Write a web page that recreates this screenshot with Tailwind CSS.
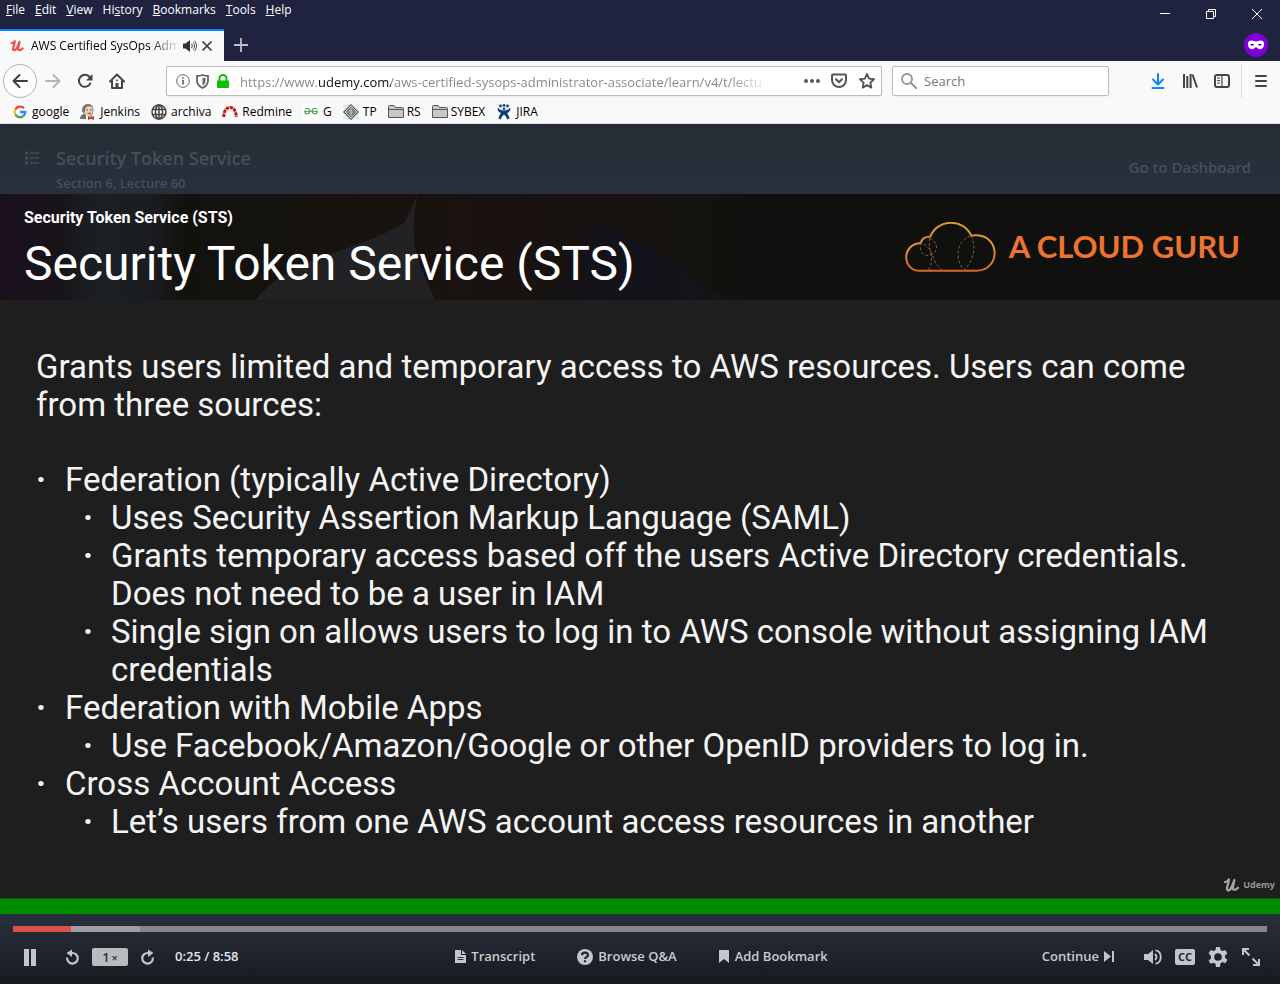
<!DOCTYPE html>
<html lang="en">
<head>
<meta charset="utf-8">
<title>AWS Certified SysOps Administrator</title>
<script src="https://cdn.jsdelivr.net/npm/@tailwindcss/browser@4"></script>
</head>
<body class="flex min-h-screen flex-col bg-[#1e1e1e] font-['Open_Sans','Noto_Sans',sans-serif] text-xs text-black">

<!-- Title bar: menus, tabs, window buttons -->
<header class="flex h-[61px] justify-between bg-[#20233f] text-white">
  <div class="flex flex-col justify-between">
    <nav class="flex h-5 items-center gap-[10px] pl-1.5 leading-5" aria-label="Menu">
      <button><u>F</u>ile</button>
      <button><u>E</u>dit</button>
      <button><u>V</u>iew</button>
      <button>Hi<u>s</u>tory</button>
      <button><u>B</u>ookmarks</button>
      <button><u>T</u>ools</button>
      <button><u>H</u>elp</button>
    </nav>
    <div class="flex h-8 items-center">
      <div class="flex h-8 w-[224px] items-center border-t-2 border-[#0a84ff] bg-[#f9f9fa] pl-[10px] text-black">
        <svg class="h-[12px] w-[14px] shrink-0" viewBox="0 0 17 15" fill="none" stroke="#ea5252" stroke-linecap="round" stroke-linejoin="round"><path stroke-width="2.8" d="M2 4C3.5 4 5 2.6 5.6 1.6C6 3.600 4.100 8 3.700 10.500C3.400 13 5.500 13.500 7.300 11.500C9.500 9 10.600 4.500 11.600 2.200C11 5 10 8.500 10 10.800C10 13.500 13 13.200 15.500 10.500"/></svg>
        <span class="ml-[7px] w-[148px] overflow-hidden whitespace-nowrap bg-linear-to-r from-black from-80% to-transparent bg-clip-text text-transparent">AWS Certified SysOps Admini</span>
        <button class="ml-1" aria-label="Mute tab"><svg class="size-[14px]" viewBox="0 0 14 14" fill="none" stroke="#333" ><path fill="#333" stroke="none" d="M0 4.500h2.500L7 1v12L2.500 9.500H0z"/><path d="M8.500 5c1 1.200 1 2.800 0 4M10 3.500c2 2 2 5 0 7M11.500 2c2.600 3 2.600 7 0 10" stroke-width=".9"/></svg></button>
        <button class="ml-1" aria-label="Close tab"><svg class="size-[12px]" viewBox="0 0 12 12" stroke="#3a3a3a" stroke-width="1.700"><path d="M1.500 1.500l9 9M10.500 1.500l-9 9"/></svg></button>
      </div>
      <button class="ml-[10px]" aria-label="New tab"><svg class="size-[14px]" viewBox="0 0 14 14" stroke="#bdbec8" stroke-width="1.800"><path d="M7 0v14M0 7h14"/></svg></button>
    </div>
  </div>
  <div class="flex flex-col items-end">
    <div class="flex h-7 items-center gap-9 pr-[18px] text-white">
      <button aria-label="Minimize"><svg class="size-[10px]" viewBox="0 0 10 10" stroke="#fff"><path d="M0 4.500h10"/></svg></button>
      <button aria-label="Restore"><svg class="size-[10px]" viewBox="0 0 10 10" fill="none" stroke="#fff"><path d="M.5 2.500h7v7h-7zM2.500 2.500v-2h7v7h-2"/></svg></button>
      <button aria-label="Close"><svg class="size-[10px]" viewBox="0 0 10 10" stroke="#fff"><path d="M0 0l10 10M10 0L0 10"/></svg></button>
    </div>
    <svg class="mt-[5px] mr-3 size-6" viewBox="0 0 24 24" role="img" aria-label="Private browsing"><circle cx="12" cy="12" r="12" fill="#8000d7"/><path fill="#fff" fill-rule="evenodd" d="M4 11c0-2.500 1.500-3.400 3.500-3.400 1.900 0 3 .9 4.500.9s2.600-.9 4.500-.9c2 0 3.500.9 3.500 3.400 0 3.200-1.500 5.200-4 5.200-2 0-2.700-2-4-2s-2 2-4 2c-2.500 0-4-2-4-5.200zm2.200 1c1.500 1.200 3.200 1 4-.2-1-1.500-3.300-1.500-4 .2zm7.600-.2c.8 1.200 2.500 1.400 4 .2-.7-1.700-3-1.700-4-.2z"/></svg>
  </div>
</header>

<!-- Navigation toolbar -->
<div class="flex h-10 items-center bg-[#f9f9fa] pl-[3px]">
  <button class="flex size-[34px] items-center justify-center rounded-full border border-[#b0b0b0] bg-[#fcfcfc]" aria-label="Back"><svg class="size-4" viewBox="0 0 16 16" fill="none" stroke="#3d3d3d" stroke-width="2" stroke-linecap="round" stroke-linejoin="round"><path d="M15 8H1.500M7.500 2l-6 6 6 6"/></svg></button>
  <button class="ml-2" aria-label="Forward"><svg class="size-4" viewBox="0 0 16 16" fill="none" stroke="#b4b4b4" stroke-width="2" stroke-linecap="round" stroke-linejoin="round"><path d="M1 8h13.500M8.500 2l6 6-6 6"/></svg></button>
  <button class="ml-4" aria-label="Reload"><svg class="size-4" viewBox="0 0 16 16" fill="none" stroke="#444" stroke-width="2" stroke-linecap="round"><path d="M13.300 10.500A6 6 0 1 1 12.600 4"/><path fill="#444" stroke="none" d="M15.500 1v6.500H9z"/></svg></button>
  <button class="ml-4" aria-label="Home"><svg class="size-4" viewBox="0 0 16 16" fill="none" stroke="#444" stroke-width="2" stroke-linecap="round" stroke-linejoin="round"><path d="M1 8.500L8 1.500l7 7M3 8v7h10V8"/><path fill="#444" stroke="none" d="M6.500 10h3v5h-3zM7.200 6.500h1.600v1.800H7.200z"/></svg></button>

  <div class="ml-[41px] flex h-[30px] min-w-0 flex-1 items-center rounded-xs border border-[#bcbcbc] bg-white pl-[9px] pr-1.5 shadow-xs">
    <svg class="size-[14px] shrink-0" viewBox="0 0 14 14" fill="none" stroke="#666"><circle cx="7" cy="7" r="6.300"/><path d="M7 6v4.500M7 3.200v1.600" stroke-width="1.700"/></svg>
    <svg class="ml-1.5 h-[15px] w-[13px] shrink-0" viewBox="0 0 13 15" fill="none"><path stroke="#666" stroke-width="1.800" d="M1 2c2 0 4-.4 5.500-1C8 1.600 10 2 12 2v4.500c0 3.500-2.500 6-5.500 7.500C3.500 12.500 1 10 1 6.500z"/><path fill="#666" d="M6.500 3.500v8C8.600 10.200 9.500 8.500 9.500 6.500v-2.400c-1 0-2-.2-3-.6z" /></svg>
    <svg class="ml-2 h-[14px] w-3 shrink-0" viewBox="0 0 12 14"><path fill="#12bc00" d="M0 6.500h12V13q0 1-1 1H1q-1 0-1-1z"/><path fill="none" stroke="#12bc00" stroke-width="2" d="M2.500 7V4.500a3.500 3.500 0 0 1 7 0V7"/></svg>
    <input aria-label="Address" class="ml-[11px] h-7 min-w-0 flex-1 bg-linear-[90deg,#848484_78px,#0c0c0d_78px,#0c0c0d_151px,#848484_151px,#848484_490px,transparent_530px] bg-clip-text pt-0.5 text-[13px] text-transparent outline-none" value="https://www.udemy.com/aws-certified-sysops-administrator-associate/learn/v4/t/lectu">
    <button class="ml-9" aria-label="Page actions"><svg class="h-4 w-[18px]" viewBox="0 0 18 16" fill="#555"><circle cx="3" cy="8" r="2"/><circle cx="9" cy="8" r="2"/><circle cx="15" cy="8" r="2"/></svg></button>
    <button class="ml-[10px]" aria-label="Save to Pocket"><svg class="size-4" viewBox="0 0 16 16" fill="none" stroke="#555" stroke-width="2" stroke-linecap="round" stroke-linejoin="round"><path d="M1.800 1.500h12.400q.8 0 .8.800V7a7 7 0 0 1-14 0V2.300q0-.8.800-.8z"/><path d="M5 6.200l3 3 3-3"/></svg></button>
    <button class="ml-3" aria-label="Bookmark page"><svg class="size-4" viewBox="0 0 16 16" fill="none" stroke="#555" stroke-width="1.900" stroke-linejoin="round"><path d="M8 1l2.100 4.600 4.900.6-3.600 3.400.9 5L8 12.200l-4.300 2.400.9-5L1 6.200l4.900-.6z"/></svg></button>
  </div>

  <div class="ml-[10px] flex h-[30px] w-[217px] items-center rounded-xs border border-[#bcbcbc] bg-white pl-2 shadow-xs">
    <svg class="size-4" viewBox="0 0 16 16" fill="none" stroke="#999" stroke-width="2" stroke-linecap="round"><circle cx="6" cy="6" r="5"/><path d="M10 10l5 5" stroke-width="2.300"/></svg>
    <input type="search" aria-label="Search" placeholder="Search" class="ml-[7px] min-w-0 flex-1 pt-0.5 text-[13px] outline-none placeholder:text-[#777]">
  </div>

  <div class="ml-[41px] flex items-center gap-4">
    <button aria-label="Downloads"><svg class="size-4" viewBox="0 0 16 16" fill="none" stroke="#0a84ff" stroke-width="2" stroke-linecap="round" stroke-linejoin="round"><path d="M8 1v10M3 6.500l5 5 5-5M2.500 15h11"/></svg></button>
    <button aria-label="Library"><svg class="size-4" viewBox="0 0 16 16" fill="none" stroke="#444" stroke-width="2"><path d="M2 1v14M5.300 3v12M8.600 1v14M10.500 1.500L15 14.500"/></svg></button>
    <button aria-label="Sidebars"><svg class="size-4" viewBox="0 0 16 16" fill="none" stroke="#444" stroke-width="2"><rect x="1" y="2" width="14" height="12" rx="2"/><path d="M8 2v12M3 5h3M3 7.500h3M3 10h3" stroke-width="1.200"/></svg></button>
  </div>
  <div class="ml-[11px] flex h-[34px] items-center border-l border-[#dcdcdc] pl-[11px] pr-[11px]">
    <button aria-label="Open menu"><svg class="size-4" viewBox="0 0 16 16" fill="none" stroke="#444" stroke-width="2" stroke-linecap="round"><path d="M3 3h10M3 8h10M3 13h10"/></svg></button>
  </div>
</div>

<!-- Bookmarks toolbar -->
<nav class="flex h-[23px] items-center gap-[11px] border-b border-[#dedede] bg-[#f9f9fa] pl-3 leading-4" aria-label="Bookmarks">
  <a href="#" class="flex items-center gap-1"><svg class="size-4" viewBox="0 0 16 16" fill="none" stroke-width="2.300"><path stroke="#ea4335" d="M3.300 5.500A5.300 5.300 0 0 1 12 4.300"/><path stroke="#fbbc05" d="M3.300 5.500a5.300 5.300 0 0 0 0 5"/><path stroke="#34a853" d="M3.300 10.500a5.300 5.300 0 0 0 8 1.500"/><path stroke="#4285f4" d="M8 8h5.300a5.300 5.300 0 0 1-2 4"/></svg>google</a>
  <a href="#" class="flex items-center gap-1"><svg class="size-4" viewBox="0 0 16 16"><path fill="#6b7074" d="M0 15c0-3 2-5 5-5l6 1 3 4z"/><path fill="#efcfb4" stroke="#5a4a42" stroke-width=".6" d="M3 5C3 2 5 .5 8 .5S13 2.500 13 6s-1.500 6.500-4.500 6.500S3 9 3 5z"/><path d="M2.200 8C1.500 3.500 4 .3 8 .3c2.500 0 4 1 4.500 2.700C10 2 7.500 2 6 3 5 4.500 5.500 6 4.300 9z" fill="#77736c"/><path d="M6.500 6H8M10 6h1.500M7.500 9.300h3.500" stroke="#443832" stroke-width=".9"/><path fill="#fff" d="M6 11l2.500 1.500L11 12l1 3.500H6z"/><path fill="#c8353a" d="M8 12l3 1.300 3-1.300v4l-3-1.200L8 16z"/></svg>Jenkins</a>
  <a href="#" class="flex items-center gap-1"><svg class="size-4" viewBox="0 0 16 16" fill="none" stroke="#444" stroke-width="1.500"><circle cx="8" cy="8" r="7"/><ellipse cx="8" cy="8" rx="3.500" ry="7"/><path d="M8 1v14M1.500 5.500h13M1.500 10.500h13"/></svg>archiva</a>
  <a href="#" class="flex items-center gap-1"><svg class="size-4" viewBox="0 0 16 16" fill="none" stroke="#c11a1a" stroke-width="3"><path stroke-dasharray="3.400 .7" d="M1.800 13C1.800 8 3.500 3.500 8 3.500s6.200 4.500 6.200 9.500"/></svg>Redmine</a>
  <a href="#" class="flex items-center gap-1"><svg class="size-4 bg-white" viewBox="0 0 16 16" fill="none" stroke="#479a48" stroke-width="1.100"><path d="M2 5.200C3.500 4 7 4 7 7S4 10.300 2 9V7.500M1 7.300h14M14 5.200C12.500 4 9 4 9 7s3 3.300 5 2V7.500"/></svg>G</a>
  <a href="#" class="flex items-center gap-1"><svg class="size-4 bg-[#eee]" viewBox="0 0 16 16" fill="none"><path fill="#f4f6f4" stroke="#555" stroke-width="1.200" d="M8 .8L15.200 8 8 15.200.8 8z"/><path stroke="#555" d="M8 3.200L12.800 8 8 12.800 3.200 8z"/><circle cx="8" cy="8" r="3.600" fill="#5f7d6a"/><path stroke="#dce6de" stroke-width=".7" d="M6 6.800h4M6 9h4M8 5v6"/></svg>TP</a>
  <a href="#" class="flex items-center gap-[3px]"><svg class="size-4" viewBox="0 0 16 16" fill="#c8c8c8" stroke="#555"><path d="M.5 13.500v-11q0-1 1-1H6L7.500 3.500h7q1 0 1 1v9zM.5 5.500h15"/></svg>RS</a>
  <a href="#" class="flex items-center gap-[3px]"><svg class="size-4" viewBox="0 0 16 16" fill="#c8c8c8" stroke="#555"><path d="M.5 13.500v-11q0-1 1-1H6L7.500 3.500h7q1 0 1 1v9zM.5 5.500h15"/></svg>SYBEX</a>
  <a href="#" class="flex items-center gap-1"><svg class="size-4" viewBox="0 0 16 16" fill="#0b3d78"><circle cx="4.500" cy="2" r="1.400"/><circle cx="8" cy="1.400" r="1.400"/><circle cx="11.500" cy="2" r="1.400"/><path d="M2 3.500c1 2 3 3 6 3s5-1 6-3c1 2.500-.5 4.500-3 5.700 1 1.300 2.300 3 2.500 5.300L11 15.500c0-2-1.200-3.500-3-5-1.800 1.500-3 3-3 5l-2.500-1c.2-2.300 1.500-4 2.500-5.300C2.500 8 1 6 2 3.500z"/><circle cx="8" cy="4.800" r="1.300"/></svg>JIRA</a>
</nav>

<main class="flex flex-1 flex-col">
  <!-- Lecture header, dimmed while the video plays -->
  <div class="flex h-[70px] items-start justify-between bg-linear-to-b from-[#262d36] to-[#29303c] pl-[25px] pr-[29px] font-semibold text-[#484e58]">
    <div class="flex gap-[17px] pt-[22px]">
      <button class="h-6" aria-label="Course contents"><svg class="h-[14px] w-[14px]" viewBox="0 0 14 14" fill="none" stroke="#484e58" stroke-width="1.600"><path d="M5 2h9M5 7h9M5 12h9"/><path d="M0 2h3M0 7h3M0 12h3" stroke-width="2.800"/></svg></button>
      <div>
        <h1 class="text-lg leading-6">Security Token Service</h1>
        <p class="mt-[3px] text-[13px] leading-5">Section 6, Lecture 60</p>
      </div>
    </div>
    <a href="#" class="pt-[31px] text-[15px] leading-6">Go to Dashboard</a>
  </div>

  <!-- Slide -->
  <section class="flex flex-1 flex-col bg-[#1e1e1e] font-['Roboto',sans-serif] text-white">
    <div class="relative flex h-[106px] items-start justify-between overflow-hidden bg-[#10100e] pl-6 pr-10">
      <svg class="absolute inset-y-0 left-0 h-[106px] w-[760px]" viewBox="0 0 760 106" aria-hidden="true">
        <defs>
          <linearGradient id="room"><stop offset="0" stop-color="#1a101d"/><stop offset=".08" stop-color="#171419"/><stop offset=".13" stop-color="#1b2024"/><stop offset=".2" stop-color="#1a1c1f"/><stop offset=".24" stop-color="#11120e"/><stop offset=".45" stop-color="#17130f"/><stop offset=".65" stop-color="#1a1210"/><stop offset=".9" stop-color="#151310"/><stop offset="1" stop-color="#10100e"/></linearGradient>
          <linearGradient id="suit"><stop offset="0" stop-color="#15120f"/><stop offset=".3" stop-color="#14131c"/><stop offset=".6" stop-color="#12121a"/><stop offset="1" stop-color="#151517"/></linearGradient>
        </defs>
        <path fill="url(#room)" d="M0 0h760v106H0z"/>
        <path fill="#222225" d="M255 106q25-30 75-46 55-18 75-32l13-28q-10 40 3 74l14 32z"/>
        <path fill="url(#suit)" d="M540 106q35-40 55-78l45 20 90 58z"/>
      </svg>
      <div class="relative">
        <p class="pt-[14px] text-base font-bold leading-5">Security Token Service (STS)</p>
        <h2 class="mt-2 text-[48px] leading-[56px]">Security Token Service (STS)</h2>
      </div>
      <div class="relative flex items-center gap-[13px] pt-7 font-['Lato','Open_Sans',sans-serif] text-[31px] font-bold text-[#ed7430]">
        <svg class="h-[50px] w-[91px]" viewBox="0 0 92 50" fill="none">
          <defs><linearGradient id="cloud" x1="0" y1="0" x2="0" y2="1"><stop offset="0" stop-color="#d59a27"/><stop offset=".5" stop-color="#e0953a"/><stop offset="1" stop-color="#d8652f"/></linearGradient></defs>
          <path stroke="url(#cloud)" stroke-width="2" d="M15 49C-3 49-4 22 16 21C17 16 21 14.500 25.500 14.500C33-4 59-4 67 13.500C97 9 98 49 72 49z"/>
          <path stroke="#806038" stroke-dasharray="3 2" d="M25 16c9 4 9 14 1 17C17 36 13 27 17 20M19 22c8 4 8 14 14 22q3 4 7 5M25 16c-3 10 7 22-2 33M67 14c5 10 3 25-8 35M66 14c-15 4-16 27-5 35"/>
        </svg>
        <span>A CLOUD GURU</span>
      </div>
    </div>

    <div class="flex-1 px-9 pt-12 text-[33px] leading-[38px] text-[#f4f4f4]">
      <p>Grants users limited and temporary access to AWS resources. Users can come from three sources:</p>
      <ul class="mt-[37px]">
        <li class="flex"><span class="w-[29px] shrink-0 font-bold">·</span>Federation (typically Active Directory)</li>
        <li>
          <ul class="pl-[47px]">
            <li class="flex"><span class="w-7 shrink-0 font-bold">·</span>Uses Security Assertion Markup Language (SAML)</li>
            <li class="flex"><span class="w-7 shrink-0 font-bold">·</span>Grants temporary access based off the users Active Directory credentials. Does not need to be a user in IAM</li>
            <li class="flex"><span class="w-7 shrink-0 font-bold">·</span>Single sign on allows users to log in to AWS console without assigning IAM credentials</li>
          </ul>
        </li>
        <li class="flex"><span class="w-[29px] shrink-0 font-bold">·</span>Federation with Mobile Apps</li>
        <li>
          <ul class="pl-[47px]">
            <li class="flex"><span class="w-7 shrink-0 font-bold">·</span>Use Facebook/Amazon/Google or other OpenID providers to log in.</li>
          </ul>
        </li>
        <li class="flex"><span class="w-[29px] shrink-0 font-bold">·</span>Cross Account Access</li>
        <li>
          <ul class="pl-[47px]">
            <li class="flex"><span class="w-7 shrink-0 font-bold">·</span>Let’s users from one AWS account access resources in another</li>
          </ul>
        </li>
      </ul>
    </div>
    <div class="flex items-center justify-end gap-[3px] pb-[5px] pr-[5px] font-['Open_Sans',sans-serif] text-[9px] font-bold leading-4 text-[#969696]">
      <svg class="h-[14px] w-[17px]" viewBox="0 0 17 15" fill="none" stroke="#a5a5a5" stroke-linecap="round" stroke-linejoin="round"><path stroke-width="2.500" d="M1.500 4.500C3.500 4.500 5 2.600 5.600 1.600C6 3.600 4.100 8 3.700 10.500C3.400 13.600 5.500 14 7.300 12C9.500 9 10.600 4.500 11.600 2.200C11 5 10 8.500 10 10.800C10 13.500 13 13.200 15.500 10.500"/></svg>
      Udemy
    </div>
    <div class="h-4 border-t border-[#0a5a0a] bg-[#008a00]"></div>
  </section>

  <!-- Player controls -->
  <footer class="h-[70px] bg-linear-to-b from-[#29303c] to-[#181a20] px-[13px] pt-3 text-[13px] font-semibold text-[#c9cbcf]">
    <div class="flex h-1.5 bg-[#83868d]" role="progressbar" aria-label="Playback" aria-valuemin="0" aria-valuemax="538" aria-valuenow="25">
      <div class="bg-[#d9504f]" style="width:4.65%"></div>
      <div class="bg-[#9c9fa7]" style="width:5.5%"></div>
    </div>
    <div class="mt-[7px] grid grid-cols-[1fr_auto_1fr] items-center pl-[10px] pr-[7px]">
      <div class="flex h-9 items-center">
        <button aria-label="Pause"><svg class="h-[17px] w-[13px]" viewBox="0 0 13 17" fill="#c4c5ca"><path d="M1 0h5v17H1zM8 0h5v17H8z"/></svg></button>
        <button class="ml-[29px]" aria-label="Rewind"><svg class="h-4 w-[14px]" viewBox="0 0 14 16" fill="none" stroke="#c4c5ca" stroke-width="2.200"><path d="M2.200 8.500A5.300 5.300 0 1 0 7 4"/><path fill="#c4c5ca" stroke="none" d="M7 .5v7.500L1.500 4z"/></svg></button>
        <button class="ml-[13px] h-[18px] w-9 rounded-xs bg-[#b9bbc1] leading-[18px] text-[#2b303a]">1<span class="ml-0.5 text-[11px]">×</span></button>
        <button class="ml-[13px]" aria-label="Forward"><svg class="h-4 w-[14px]" viewBox="0 0 14 16" fill="none" stroke="#c4c5ca" stroke-width="2.200"><path d="M11.800 8.500A5.300 5.300 0 1 1 7 4"/><path fill="#c4c5ca" stroke="none" d="M7 .5v7.500l5.500-4z"/></svg></button>
        <span class="ml-5 text-[#e6e7e9]">0:25 / 8:58</span>
      </div>
      <div class="flex items-center gap-[42px]">
        <button class="flex items-center gap-[5px]"><svg class="h-[13px] w-[11px]" viewBox="0 0 11 13"><path fill="#c4c5ca" d="M0 0h6v5h5v8H0zM7 0l4 4H7z"/><path stroke="#2a2f38" d="M2.500 7.500h6M2.500 9.500h6"/></svg>Transcript</button>
        <button class="flex items-center gap-[5px]"><svg class="size-4" viewBox="0 0 16 16"><circle cx="8" cy="8" r="8" fill="#c4c5ca"/><path fill="none" stroke="#22262f" stroke-width="2.200" d="M5 6.300C5 2.700 11 2.700 11 6.200 11 8 8 8 8 10M8 11.200v2"/></svg>Browse Q&amp;A</button>
        <button class="flex items-center gap-1.5"><svg class="h-[13px] w-[10px]" viewBox="0 0 10 13" fill="#c4c5ca"><path d="M0 0h10v13L5 9l-5 4z"/></svg>Add Bookmark</button>
      </div>
      <div class="flex items-center justify-end">
        <button class="flex items-center gap-[5px]">Continue<svg class="h-[11px] w-[10px]" viewBox="0 0 10 11" fill="#c4c5ca"><path d="M0 0l7 5.500L0 11zM8 0h2v11H8z"/></svg></button>
        <button class="ml-[30px]" aria-label="Volume"><svg class="h-4 w-[19px]" viewBox="0 0 19 16" fill="none" stroke="#c4c5ca" stroke-width="1.800"><path fill="#c4c5ca" stroke="none" d="M0 5h4l5-4v14l-5-4H0z"/><path d="M11 5q3 3 0 6M11.500 1.300c7 1 7 12.400 0 13.400"/></svg></button>
        <button class="ml-3 h-4 w-5 rounded-xs bg-[#c4c5ca] text-[11px] font-bold leading-4 text-[#22262f]" aria-label="Captions">CC</button>
        <button class="ml-[13px]" aria-label="Settings"><svg class="size-5" viewBox="0 0 20 20"><path fill="#c4c5ca" fill-rule="evenodd" d="M8 0h4l.5 3 2 1.100 2.900-1.100 2 3.400-2.400 2v2.400l2.400 2-2 3.500-2.900-1.200-2 1.200L12 20H8l-.5-3.200-2-1.100-2.900 1.100-2-3.400 2.400-2V9L.6 6.500 2.600 3l2.900 1.100L7.500 3zM10 6.200a3.800 3.800 0 1 0 0 7.600 3.800 3.800 0 0 0 0-7.600z"/></svg></button>
        <button class="ml-[14px]" aria-label="Fullscreen"><svg class="size-[18px]" viewBox="0 0 18 18" fill="none" stroke="#c4c5ca" stroke-width="2"><path d="M1 7V1h6M1.500 1.500l6 6M17 11v6h-6M16.500 16.500l-6-6"/></svg></button>
      </div>
    </div>
  </footer>
</main>
</body>
</html>
